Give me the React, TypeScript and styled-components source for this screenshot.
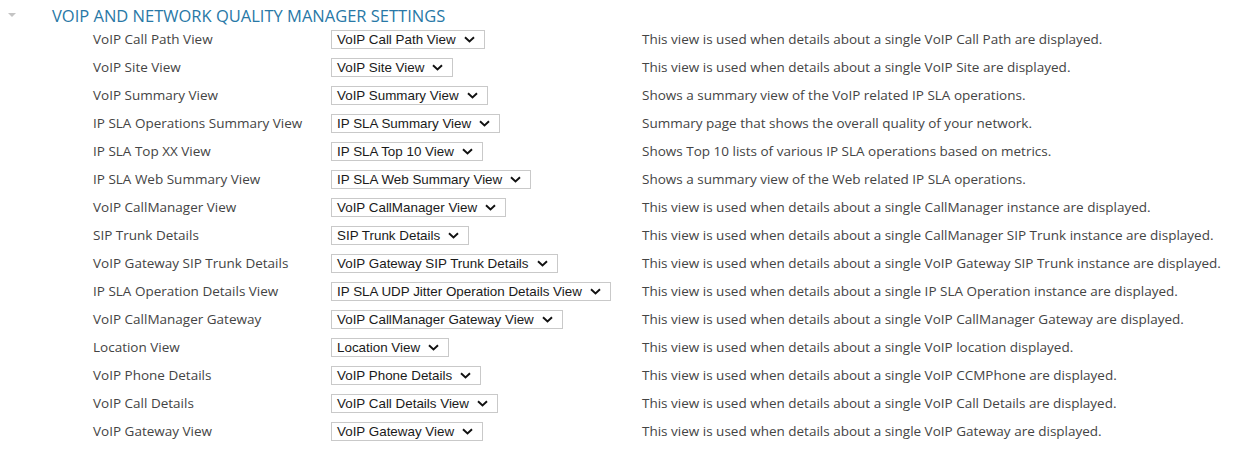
import React from 'react';
import styled, { createGlobalStyle } from 'styled-components';

const GlobalStyle = createGlobalStyle`
  body {
    margin: 0;
    background: #ffffff;
    font-family: "Open Sans", "Liberation Sans", sans-serif;
  }
`;

interface ViewRow {
  label: string;
  value: string;
  description: string;
}

const rows: ViewRow[] = [
  { label: 'VoIP Call Path View', value: 'VoIP Call Path View', description: 'This view is used when details about a single VoIP Call Path are displayed.' },
  { label: 'VoIP Site View', value: 'VoIP Site View', description: 'This view is used when details about a single VoIP Site are displayed.' },
  { label: 'VoIP Summary View', value: 'VoIP Summary View', description: 'Shows a summary view of the VoIP related IP SLA operations.' },
  { label: 'IP SLA Operations Summary View', value: 'IP SLA Summary View', description: 'Summary page that shows the overall quality of your network.' },
  { label: 'IP SLA Top XX View', value: 'IP SLA Top 10 View', description: 'Shows Top 10 lists of various IP SLA operations based on metrics.' },
  { label: 'IP SLA Web Summary View', value: 'IP SLA Web Summary View', description: 'Shows a summary view of the Web related IP SLA operations.' },
  { label: 'VoIP CallManager View', value: 'VoIP CallManager View', description: 'This view is used when details about a single CallManager instance are displayed.' },
  { label: 'SIP Trunk Details', value: 'SIP Trunk Details', description: 'This view is used when details about a single CallManager SIP Trunk instance are displayed.' },
  { label: 'VoIP Gateway SIP Trunk Details', value: 'VoIP Gateway SIP Trunk Details', description: 'This view is used when details about a single VoIP Gateway SIP Trunk instance are displayed.' },
  { label: 'IP SLA Operation Details View', value: 'IP SLA UDP Jitter Operation Details View', description: 'This view is used when details about a single IP SLA Operation instance are displayed.' },
  { label: 'VoIP CallManager Gateway', value: 'VoIP CallManager Gateway View', description: 'This view is used when details about a single VoIP CallManager Gateway are displayed.' },
  { label: 'Location View', value: 'Location View', description: 'This view is used when details about a single VoIP location displayed.' },
  { label: 'VoIP Phone Details', value: 'VoIP Phone Details', description: 'This view is used when details about a single VoIP CCMPhone are displayed.' },
  { label: 'VoIP Call Details', value: 'VoIP Call Details View', description: 'This view is used when details about a single VoIP Call Details are displayed.' },
  { label: 'VoIP Gateway View', value: 'VoIP Gateway View', description: 'This view is used when details about a single VoIP Gateway are displayed.' },
];

const Page = styled.div`
  padding-top: 5px;
`;

const SectionHeader = styled.div`
  display: flex;
  align-items: center;
  height: 20px;
  padding-left: 8px;
`;

const Caret = styled.div`
  width: 0;
  height: 0;
  border-left: 4.5px solid transparent;
  border-right: 4.5px solid transparent;
  border-top: 4px solid #c4c4c4;
  margin-right: 36px;
`;

const Title = styled.h2`
  margin: 0;
  font-family: "Open Sans", sans-serif;
  font-weight: 400;
  font-size: 16.5px;
  color: #2878a6;
  text-transform: uppercase;
`;

const RowList = styled.div`
  padding-left: 93px;
  display: flex;
  flex-direction: column;
`;

const Row = styled.div`
  display: grid;
  grid-template-columns: 238px 311px 1fr;
  align-items: center;
  height: 28px;
`;

const Label = styled.span`
  font-family: "Open Sans", sans-serif;
  font-size: 13.5px;
  color: #444444;
  white-space: nowrap;
`;

const SelectBox = styled.div`
  justify-self: start;
  display: inline-flex;
  align-items: center;
  gap: 8px;
  height: 17px;
  padding: 0 9px 0 5px;
  border: 1px solid #c9c9c9;
  background: #ffffff;
  font-family: "Liberation Sans", Arial, sans-serif;
  font-size: 13.4px;
  color: #1a1a1a;
  white-space: nowrap;
`;

const Description = styled.span`
  font-family: "Open Sans", sans-serif;
  font-size: 13.5px;
  color: #444444;
  white-space: nowrap;
`;

function Chevron() {
  return (
    <svg width="11" height="7" viewBox="0 0 11 7">
      <path d="M1 1.2 L5.5 5.5 L10 1.2" fill="none" stroke="#111" strokeWidth="1.9" />
    </svg>
  );
}

export default function App() {
  return (
    <Page>
      <GlobalStyle />
      <SectionHeader>
        <Caret />
        <Title>VoIP and Network Quality Manager Settings</Title>
      </SectionHeader>
      <RowList>
        {rows.map((row) => (
          <Row key={row.label}>
            <Label>{row.label}</Label>
            <SelectBox>
              <span>{row.value}</span>
              <Chevron />
            </SelectBox>
            <Description>{row.description}</Description>
          </Row>
        ))}
      </RowList>
    </Page>
  );
}
